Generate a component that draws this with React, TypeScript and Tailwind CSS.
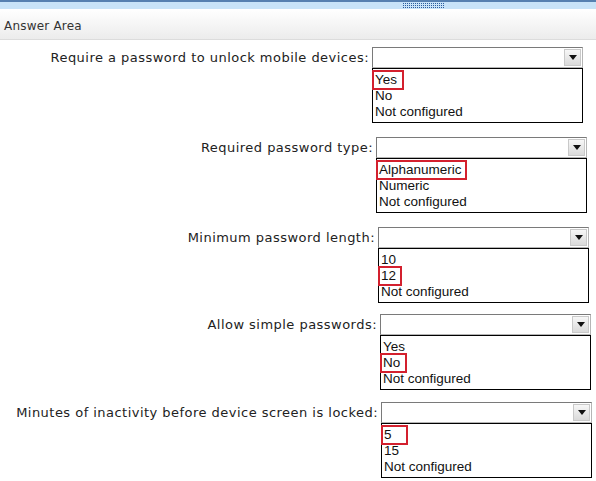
const rows = [
  {
    label: "Require a password to unlock mobile devices:",
    options: ["Yes", "No", "Not configured"],
    pick: 0,
    labelW: "w-[372px]",
    mt: "mt-[7px]",
    boxW: "w-[32px]",
  },
  {
    label: "Required password type:",
    options: ["Alphanumeric", "Numeric", "Not configured"],
    pick: 0,
    labelW: "w-[376px]",
    mt: "mt-[14px]",
    boxW: "w-[91px]",
  },
  {
    label: "Minimum password length:",
    options: ["10", "12", "Not configured"],
    pick: 1,
    labelW: "w-[378px]",
    mt: "mt-[14px]",
    boxW: "w-[24px]",
  },
  {
    label: "Allow simple passwords:",
    options: ["Yes", "No", "Not configured"],
    pick: 1,
    labelW: "w-[380px]",
    mt: "mt-[11px]",
    boxW: "w-[27px]",
  },
  {
    label: "Minutes of inactivity before device screen is locked:",
    options: ["5", "15", "Not configured"],
    pick: 0,
    labelW: "w-[381px]",
    mt: "mt-[12px]",
    boxW: "w-[27px]",
  },
];

function DropArrow() {
  return (
    <div className="w-[17px] h-[17px] m-[1px] flex items-center justify-center border border-[#c9c9c9] bg-gradient-to-b from-[#f7f7f7] to-[#dadada]">
      <svg width="8" height="5" viewBox="0 0 8 5">
        <polygon points="0,0 8,0 4,5" fill="#111" />
      </svg>
    </div>
  );
}

export default function App() {
  return (
    <div className="w-[596px] h-[481px] overflow-hidden bg-white font-['DejaVu_Sans',sans-serif]">
      {/* top strip */}
      <div className="relative h-[9px] border-t-2 border-[#5680b0] bg-[#c8e3f8]">
        <svg className="absolute left-[403px] top-[1px]" width="42" height="6">
          <defs>
            <pattern id="dots" width="2" height="2" patternUnits="userSpaceOnUse">
              <rect width="1" height="1" fill="#2a5c9e" />
            </pattern>
          </defs>
          <rect width="42" height="6" fill="url(#dots)" />
        </svg>
      </div>

      {/* header */}
      <div className="h-[31px] flex items-center pl-[4px] pt-[3px] text-[12px] tracking-[0.2px] text-[#333] bg-gradient-to-b from-white to-[#ececec] border-b border-[#dcdcdc]">
        Answer Area
      </div>

      {rows.map((r) => (
        <div key={r.label} className={`flex ${r.mt}`}>
          <div className={`${r.labelW} shrink-0 h-[21px] flex items-center justify-end pr-[3px] text-[13px] text-[#222] tracking-[0.47px]`}>
            {r.label}
          </div>
          <div className="flex flex-col">
            <div className="w-[211px] h-[21px] flex justify-end border border-t-[#7a7a7a] border-l-[#7a7a7a] border-r-[#b5b5b5] border-b-[#b5b5b5] bg-white">
              <DropArrow />
            </div>
            <div className="w-[211px] h-[55px] border border-black pt-[3px] pl-[2px] font-['Liberation_Sans',sans-serif] text-[13.5px] leading-[16px] text-[#111]">
              {r.options.map((o, i) => (
                <div key={o} className="h-[16px]">
                  <span className="relative inline-block">
                    {o}
                    {i === r.pick && (
                      <span className={`absolute -left-[3px] -top-[2px] h-[20px] ${r.boxW} border-2 border-[#d3202e]`} />
                    )}
                  </span>
                </div>
              ))}
            </div>
          </div>
        </div>
      ))}
    </div>
  );
}
